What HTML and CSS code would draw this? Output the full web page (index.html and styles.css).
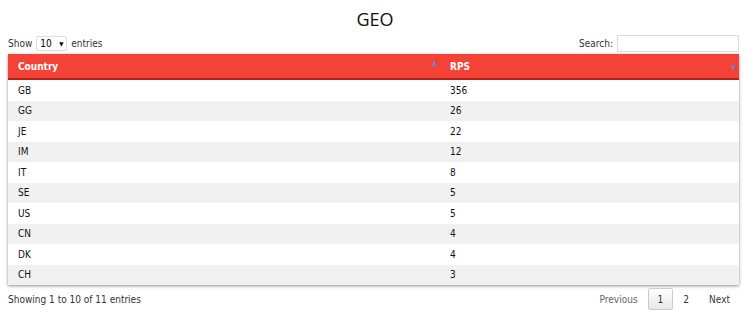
FILE: index.html
```html
<!DOCTYPE html>
<html>
<head>
<meta charset="utf-8">
<link rel="stylesheet" href="styles.css">
</head>
<body>
<h1 class="title">GEO</h1>
<div class="wrapper">
  <div class="top">
    <label class="length">Show <span class="select">10 <span class="caret">▼</span></span> entries</label>
    <label class="search">Search: <span class="input"></span></label>
  </div>
  <table class="grid">
    <thead>
      <tr>
        <th class="c1">Country<span class="sort up">▲</span></th>
        <th class="c2">RPS<span class="sort down">▼</span></th>
      </tr>
    </thead>
    <tbody>
      <tr><td>GB</td><td>356</td></tr>
      <tr class="odd"><td>GG</td><td>26</td></tr>
      <tr><td>JE</td><td>22</td></tr>
      <tr class="odd"><td>IM</td><td>12</td></tr>
      <tr><td>IT</td><td>8</td></tr>
      <tr class="odd"><td>SE</td><td>5</td></tr>
      <tr><td>US</td><td>5</td></tr>
      <tr class="odd"><td>CN</td><td>4</td></tr>
      <tr><td>DK</td><td>4</td></tr>
      <tr class="odd"><td>CH</td><td>3</td></tr>
    </tbody>
  </table>
  <div class="bottom">
    <div class="info">Showing 1 to 10 of 11 entries</div>
    <div class="pager">
      <span class="pbtn prev">Previous</span>
      <span class="pbtn current">1</span>
      <span class="pbtn">2</span>
      <span class="pbtn next">Next</span>
    </div>
  </div>
</div>
</body>
</html>
```
FILE: styles.css
```css
html, body { margin: 0; padding: 0; background: #fff; }
body { font-family: "DejaVu Sans Condensed", "DejaVu Sans", Verdana, sans-serif; font-size: 10px; color: #333; }
.title {
  margin: 0; padding-top: 7px; height: 27px;
  text-align: center; font-family: "Open Sans", sans-serif; font-weight: 400;
  font-size: 18px; line-height: 24px; color: #111;
}
.wrapper { padding: 0 11px 0 8px; }
.top { display: flex; justify-content: space-between; align-items: flex-end; height: 19px; }
.length { display: flex; align-items: center; padding-bottom: 2px; }
.select {
  display: inline-flex; align-items: center; justify-content: space-between;
  width: 23px; height: 13px; margin: 0 4px 0 4px; padding: 0 3px;
  border: 1px solid #ddd; border-radius: 2px; color: #000;
}
.caret { font-size: 6px; }
.search { display: flex; align-items: center; padding-bottom: 1px; }
.input { display: inline-block; width: 120px; height: 15px; margin-left: 4px; border: 1px solid #ddd; }
.grid {
  width: 100%; border-collapse: collapse; margin-top: 1px;
  box-shadow: 0 1px 3px rgba(0,0,0,0.45);
}
.grid th {
  background: #f44336; color: #fff; text-align: left; font-weight: bold;
  height: 24px; padding: 0 10px; border-bottom: 2px solid #b3241c; position: relative;
}
.grid th.c1 { width: 412px; }
.sort { position: absolute; font-size: 7px; color: #6e7fdc; }
.sort.up { right: 3px; top: 5px; }
.sort.down { right: 3px; top: 10px; }
.grid td { height: 20.5px; padding: 0 10px; color: #111; }
.grid tr.odd td { background: #f1f1f1; }
.bottom { display: flex; justify-content: space-between; align-items: center; margin-top: 3px; }
.info { padding-left: 0; }
.pager { display: flex; align-items: center; }
.pbtn { display: inline-block; padding: 6px 10px 5px; color: #333; }
.pbtn.prev { color: #666; margin-right: 0; }
.pbtn.current { border: 1px solid #ccc; background: linear-gradient(#fff, #e8e8e8); border-radius: 2px; padding: 5px 9px 4px; }
.pbtn.next { padding-right: 9px; }
```
